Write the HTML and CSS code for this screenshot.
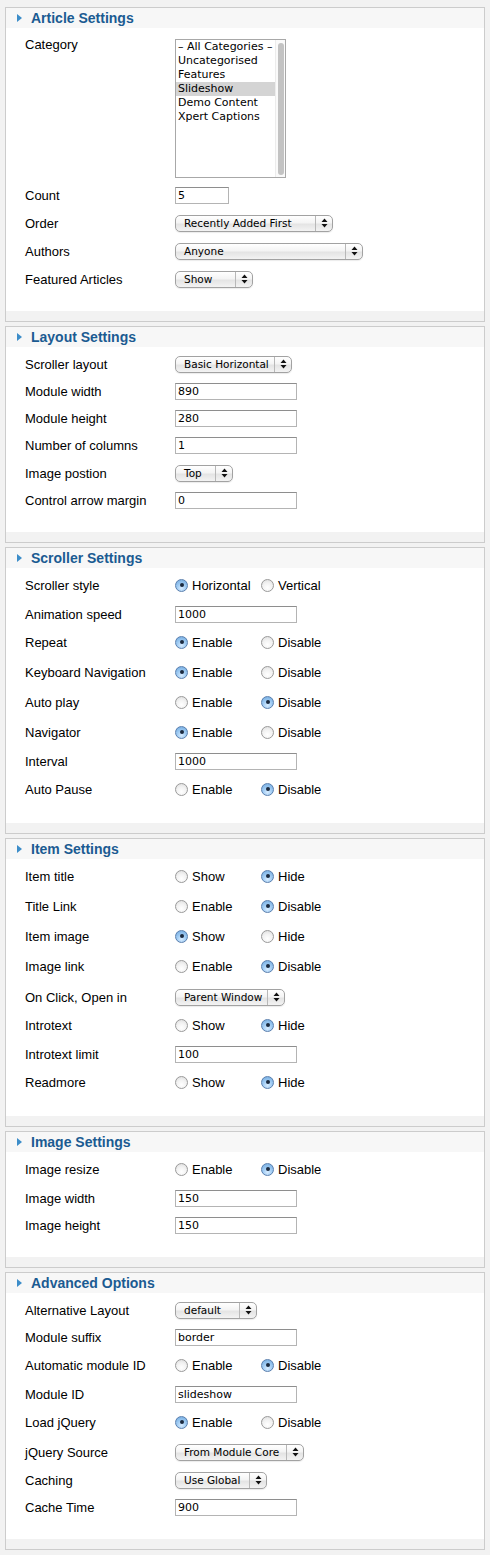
FILE: index.html
```html
<!DOCTYPE html>
<html>
<head>
<meta charset="utf-8">
<link rel="stylesheet" href="styles.css">
</head>
<body>
<div class="page">

  <section class="panel">
    <h3 class="panel-head"><span class="tri"></span>Article Settings</h3>
    <div class="panel-body">
      <div class="row r-list">
        <span class="lbl">Category</span>
        <div class="listbox">
          <div class="items">
            <div class="item">– All Categories –</div>
            <div class="item">Uncategorised</div>
            <div class="item">Features</div>
            <div class="item sel-item">Slideshow</div>
            <div class="item">Demo Content</div>
            <div class="item">Xpert Captions</div>
          </div>
          <div class="track"><div class="thumb"></div></div>
        </div>
      </div>
      <div class="row r-in"><span class="lbl">Count</span><input class="txt w54" type="text" value="5"></div>
      <div class="row r-sel"><span class="lbl">Order</span><div class="sel w158"><span class="sel-text">Recently Added First</span><span class="sel-arr"><svg width="7" height="10" viewBox="0 0 7 10"><path d="M0.5 4 L3.5 0.5 L6.5 4Z M0.5 6 L3.5 9.5 L6.5 6Z"/></svg></span></div></div>
      <div class="row r-sel"><span class="lbl">Authors</span><div class="sel w188"><span class="sel-text">Anyone</span><span class="sel-arr"><svg width="7" height="10" viewBox="0 0 7 10"><path d="M0.5 4 L3.5 0.5 L6.5 4Z M0.5 6 L3.5 9.5 L6.5 6Z"/></svg></span></div></div>
      <div class="row r-sel"><span class="lbl">Featured Articles</span><div class="sel w78"><span class="sel-text">Show</span><span class="sel-arr"><svg width="7" height="10" viewBox="0 0 7 10"><path d="M0.5 4 L3.5 0.5 L6.5 4Z M0.5 6 L3.5 9.5 L6.5 6Z"/></svg></span></div></div>
    </div>
    <div class="panel-foot"></div>
  </section>

  <section class="panel">
    <h3 class="panel-head"><span class="tri"></span>Layout Settings</h3>
    <div class="panel-body">
      <div class="row r-sel"><span class="lbl">Scroller layout</span><div class="sel w117"><span class="sel-text">Basic Horizontal</span><span class="sel-arr"><svg width="7" height="10" viewBox="0 0 7 10"><path d="M0.5 4 L3.5 0.5 L6.5 4Z M0.5 6 L3.5 9.5 L6.5 6Z"/></svg></span></div></div>
      <div class="row r-in"><span class="lbl">Module width</span><input class="txt w122" type="text" value="890"></div>
      <div class="row r-in"><span class="lbl">Module height</span><input class="txt w122" type="text" value="280"></div>
      <div class="row r-in"><span class="lbl">Number of columns</span><input class="txt w122" type="text" value="1"></div>
      <div class="row r-sel"><span class="lbl">Image postion</span><div class="sel w58"><span class="sel-text">Top</span><span class="sel-arr"><svg width="7" height="10" viewBox="0 0 7 10"><path d="M0.5 4 L3.5 0.5 L6.5 4Z M0.5 6 L3.5 9.5 L6.5 6Z"/></svg></span></div></div>
      <div class="row r-in"><span class="lbl">Control arrow margin</span><input class="txt w122" type="text" value="0"></div>
    </div>
    <div class="panel-foot"></div>
  </section>

  <section class="panel">
    <h3 class="panel-head"><span class="tri"></span>Scroller Settings</h3>
    <div class="panel-body">
      <div class="row r-rad"><span class="lbl">Scroller style</span><span class="opt"><span class="radio on"></span>Horizontal</span><span class="opt"><span class="radio"></span>Vertical</span></div>
      <div class="row r-in"><span class="lbl">Animation speed</span><input class="txt w122" type="text" value="1000"></div>
      <div class="row r-rad"><span class="lbl">Repeat</span><span class="opt"><span class="radio on"></span>Enable</span><span class="opt"><span class="radio"></span>Disable</span></div>
      <div class="row r-rad"><span class="lbl">Keyboard Navigation</span><span class="opt"><span class="radio on"></span>Enable</span><span class="opt"><span class="radio"></span>Disable</span></div>
      <div class="row r-rad"><span class="lbl">Auto play</span><span class="opt"><span class="radio"></span>Enable</span><span class="opt"><span class="radio on"></span>Disable</span></div>
      <div class="row r-rad"><span class="lbl">Navigator</span><span class="opt"><span class="radio on"></span>Enable</span><span class="opt"><span class="radio"></span>Disable</span></div>
      <div class="row r-in"><span class="lbl">Interval</span><input class="txt w122" type="text" value="1000"></div>
      <div class="row r-rad"><span class="lbl">Auto Pause</span><span class="opt"><span class="radio"></span>Enable</span><span class="opt"><span class="radio on"></span>Disable</span></div>
    </div>
    <div class="panel-foot"></div>
  </section>

  <section class="panel">
    <h3 class="panel-head"><span class="tri"></span>Item Settings</h3>
    <div class="panel-body">
      <div class="row r-rad"><span class="lbl">Item title</span><span class="opt"><span class="radio"></span>Show</span><span class="opt"><span class="radio on"></span>Hide</span></div>
      <div class="row r-rad"><span class="lbl">Title Link</span><span class="opt"><span class="radio"></span>Enable</span><span class="opt"><span class="radio on"></span>Disable</span></div>
      <div class="row r-rad"><span class="lbl">Item image</span><span class="opt"><span class="radio on"></span>Show</span><span class="opt"><span class="radio"></span>Hide</span></div>
      <div class="row r-rad"><span class="lbl">Image link</span><span class="opt"><span class="radio"></span>Enable</span><span class="opt"><span class="radio on"></span>Disable</span></div>
      <div class="row r-sel r-sel-tall"><span class="lbl">On Click, Open in</span><div class="sel w110"><span class="sel-text">Parent Window</span><span class="sel-arr"><svg width="7" height="10" viewBox="0 0 7 10"><path d="M0.5 4 L3.5 0.5 L6.5 4Z M0.5 6 L3.5 9.5 L6.5 6Z"/></svg></span></div></div>
      <div class="row r-rad"><span class="lbl">Introtext</span><span class="opt"><span class="radio"></span>Show</span><span class="opt"><span class="radio on"></span>Hide</span></div>
      <div class="row r-in"><span class="lbl">Introtext limit</span><input class="txt w122" type="text" value="100"></div>
      <div class="row r-rad"><span class="lbl">Readmore</span><span class="opt"><span class="radio"></span>Show</span><span class="opt"><span class="radio on"></span>Hide</span></div>
    </div>
    <div class="panel-foot"></div>
  </section>

  <section class="panel">
    <h3 class="panel-head"><span class="tri"></span>Image Settings</h3>
    <div class="panel-body">
      <div class="row r-rad"><span class="lbl">Image resize</span><span class="opt"><span class="radio"></span>Enable</span><span class="opt"><span class="radio on"></span>Disable</span></div>
      <div class="row r-in"><span class="lbl">Image width</span><input class="txt w122" type="text" value="150"></div>
      <div class="row r-in"><span class="lbl">Image height</span><input class="txt w122" type="text" value="150"></div>
    </div>
    <div class="panel-foot"></div>
  </section>

  <section class="panel">
    <h3 class="panel-head"><span class="tri"></span>Advanced Options</h3>
    <div class="panel-body">
      <div class="row r-sel"><span class="lbl">Alternative Layout</span><div class="sel w82"><span class="sel-text">default</span><span class="sel-arr"><svg width="7" height="10" viewBox="0 0 7 10"><path d="M0.5 4 L3.5 0.5 L6.5 4Z M0.5 6 L3.5 9.5 L6.5 6Z"/></svg></span></div></div>
      <div class="row r-in"><span class="lbl">Module suffix</span><input class="txt w122" type="text" value="border"></div>
      <div class="row r-rad"><span class="lbl">Automatic module ID</span><span class="opt"><span class="radio"></span>Enable</span><span class="opt"><span class="radio on"></span>Disable</span></div>
      <div class="row r-in"><span class="lbl">Module ID</span><input class="txt w122" type="text" value="slideshow"></div>
      <div class="row r-rad"><span class="lbl">Load jQuery</span><span class="opt"><span class="radio on"></span>Enable</span><span class="opt"><span class="radio"></span>Disable</span></div>
      <div class="row r-sel"><span class="lbl">jQuery Source</span><div class="sel w129"><span class="sel-text">From Module Core</span><span class="sel-arr"><svg width="7" height="10" viewBox="0 0 7 10"><path d="M0.5 4 L3.5 0.5 L6.5 4Z M0.5 6 L3.5 9.5 L6.5 6Z"/></svg></span></div></div>
      <div class="row r-sel"><span class="lbl">Caching</span><div class="sel w92"><span class="sel-text">Use Global</span><span class="sel-arr"><svg width="7" height="10" viewBox="0 0 7 10"><path d="M0.5 4 L3.5 0.5 L6.5 4Z M0.5 6 L3.5 9.5 L6.5 6Z"/></svg></span></div></div>
      <div class="row r-in"><span class="lbl">Cache Time</span><input class="txt w122" type="text" value="900"></div>
    </div>
    <div class="panel-foot"></div>
  </section>

</div>
</body>
</html>
```

FILE: styles.css
```css
* { box-sizing: border-box; }

body {
  margin: 0;
  background: #f2f2f2;
  font-family: "Liberation Sans", Arial, sans-serif;
  font-size: 13px;
  color: #000;
}

.page {
  padding: 7px 5px 0;
  display: flex;
  flex-direction: column;
  gap: 4px;
}

.panel {
  border: 1px solid #cccccc;
  background: #fff;
}

.panel-head {
  margin: 0;
  height: 20px;
  background: #f7f7f7;
  display: flex;
  align-items: center;
  padding-left: 11px;
  font-size: 14px;
  font-weight: bold;
  color: #1b5b92;
}

.tri {
  width: 0;
  height: 0;
  border-left: 5px solid #3c8dc9;
  border-top: 4px solid transparent;
  border-bottom: 4px solid transparent;
  margin-right: 9px;
}

.panel-body {
  padding: 3px 0 18px;
}

.panel-foot {
  height: 10px;
  background: #f2f2f2;
}

.row {
  display: flex;
  align-items: center;
}

.r-in { height: 27px; }
.r-sel { height: 28px; }
.r-sel-tall { height: 29px; padding-top: 1px; }
.r-rad { height: 30px; padding-bottom: 2px; }

.r-list {
  height: 151px;
  align-items: flex-start;
}

.lbl {
  flex: none;
  width: 169px;
  padding-left: 19px;
  line-height: 15px;
}

.r-list .lbl { margin-top: 6px; }

/* list box */
.listbox {
  margin-top: 8px;
  width: 111px;
  height: 139px;
  border: 1px solid #a8a8a8;
  display: flex;
  background: #fff;
}

.items {
  flex: 1;
  padding-top: 0;
  font-family: "DejaVu Sans", sans-serif;
  font-size: 11px;
}

.item {
  height: 14px;
  line-height: 14px;
  padding-left: 2px;
  white-space: nowrap;
}

.sel-item { background: #d4d4d4; }

.track {
  width: 10px;
  border-left: 1px solid #ececec;
  background: #fafafa;
  padding: 3px 1px 2px 2px;
}

.thumb {
  height: 100%;
  width: 6px;
  border-radius: 3px;
  background: #c3c3c3;
}

/* text inputs */
.txt {
  height: 17px;
  border: 1px solid #b4b4b4;
  border-top-color: #8e8e8e;
  padding: 0 0 0 2px;
  margin: 0;
  font-family: "DejaVu Sans", sans-serif;
  font-size: 11px;
  color: #000;
  background: #fff;
  outline: none;
}

.w54 { width: 54px; }
.w122 { width: 122px; }

/* pseudo aqua select */
.sel {
  height: 17px;
  display: flex;
  align-items: stretch;
  border: 1px solid #a2a2a2;
  border-radius: 5px;
  background: linear-gradient(#ffffff 0%, #f4f4f4 45%, #e4e4e4 55%, #f3f3f3 100%);
  box-shadow: 0 1px 1px rgba(0,0,0,0.08);
  font-family: "DejaVu Sans", sans-serif;
  font-size: 10.5px;
  color: #000;
}

.sel-text {
  flex: 1;
  padding-left: 8px;
  line-height: 15px;
  white-space: nowrap;
  overflow: hidden;
}

.sel-arr {
  flex: none;
  width: 17px;
  border-left: 1px solid #b8b8b8;
  display: flex;
  align-items: center;
  justify-content: center;
}

.sel-arr svg { display: block; fill: #111; }

.w58 { width: 58px; }
.w78 { width: 78px; }
.w82 { width: 82px; }
.w92 { width: 92px; }
.w110 { width: 110px; }
.w117 { width: 117px; }
.w129 { width: 129px; }
.w158 { width: 158px; }
.w188 { width: 188px; }

/* radios */
.opt {
  display: flex;
  align-items: center;
  width: 86px;
  line-height: 15px;
}

.radio {
  flex: none;
  width: 13px;
  height: 13px;
  border-radius: 50%;
  border: 1px solid #9a9a9a;
  background: radial-gradient(circle at 50% 70%, #ffffff 0%, #f2f2f2 50%, #d9d9d9 100%);
  margin-right: 4px;
  position: relative;
}

.radio.on {
  border-color: #5a7fae;
  background: radial-gradient(circle at 50% 75%, #d8ecff 0%, #9fcbf3 45%, #6ea7dc 100%);
}

.radio.on::after {
  content: "";
  position: absolute;
  left: 3.5px;
  top: 3.5px;
  width: 4px;
  height: 4px;
  border-radius: 50%;
  background: #1b2a3f;
}
```
